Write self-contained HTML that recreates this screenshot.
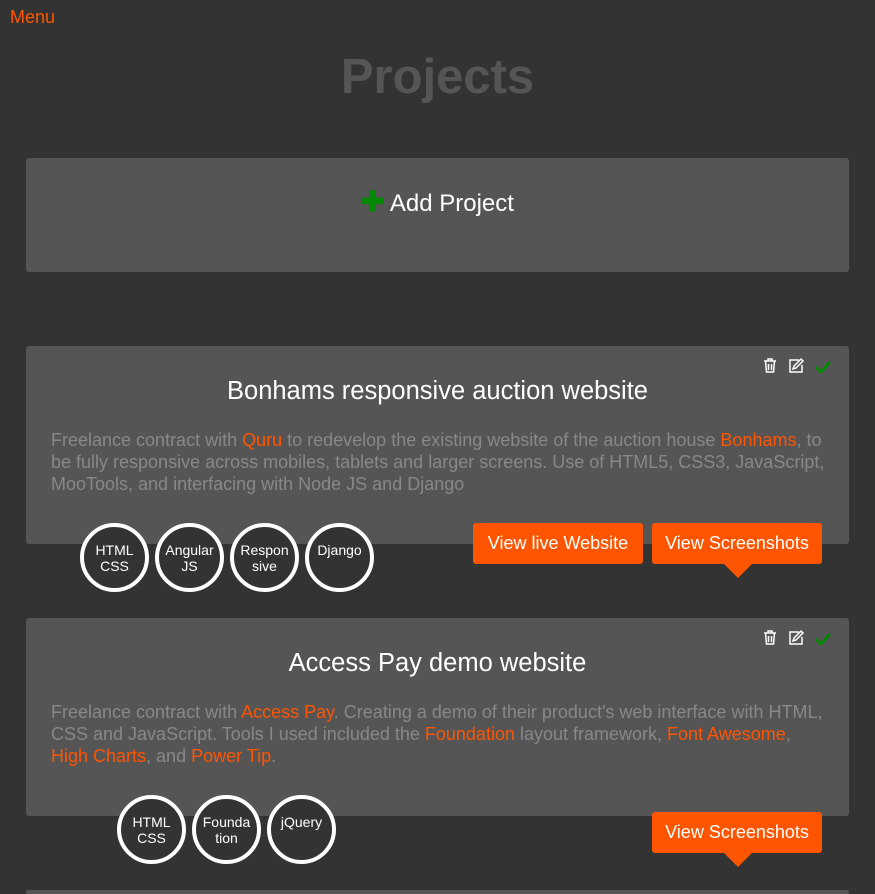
<!DOCTYPE html>
<html style="overflow:hidden;height:894px"><head><style>
body{margin:0;background:#333;font-family:"Liberation Sans",sans-serif;width:875px;height:894px;overflow:hidden;position:relative}
.menu{position:absolute;left:10px;top:7px;color:#f50;font-size:18px}
h1{position:absolute;top:49px;left:0;width:875px;text-align:center;margin:0;color:#555;font-size:49px;font-weight:bold}
.add{position:absolute;left:26px;top:158px;width:823px;height:114px;background:#555;border-radius:3px;color:#fff;font-size:24px;text-align:center;line-height:88px}
.add b{color:#080;font-size:28px}
.card{position:absolute;left:26px;width:823px;height:198px;background:#555;border-radius:3px}
.card h2{margin:0;position:absolute;top:31px;width:100%;text-align:center;color:#fff;font-weight:normal;font-size:25.5px}
.card p{position:absolute;left:25px;top:83px;width:775px;margin:0;color:#888;font-size:18px;line-height:22px}
.card p a{color:#f50}
.icons{position:absolute;right:12px;top:10px}
.circ{position:absolute;width:61px;height:61px;border:4.5px solid #fff;border-radius:50%;background:#333;color:#fff;font-size:14px;text-align:center;box-sizing:content-box}
.circ span{display:block;margin-top:15px;line-height:16px}
.btn{position:absolute;height:41px;background:#f50;color:#fff;font-size:18px;line-height:41px;text-align:center;border-radius:3px}
.btn.arr:after{content:"";position:absolute;left:72px;bottom:-14px;border-left:14px solid transparent;border-right:14px solid transparent;border-top:14px solid #f50}
</style></head><body>
<div class="menu">Menu</div>
<h1>Projects</h1>
<div class="add"><b>✚</b> Add Project</div>

<div class="card" style="top:346px">
<svg class="icons" width="76" height="20" viewBox="0 0 76 20"><g fill="none" stroke="#fff" stroke-width="1.5"><path d="M3 5h12M7 5V3h4v2M4.5 5l1 11h7l1-11M7.5 8v6M10.5 8v6"/><path d="M38 4h-9v12h12v-7M35 12l-3 1 1-3 7-7 2 2z"/></g><path d="M56 10l4 4 8-9 2 2-10 11-6-6z" fill="#080"/></svg>
<h2>Bonhams responsive auction website</h2>
<p>Freelance contract with <a>Quru</a> to redevelop the existing website of the auction house <a>Bonhams</a>, to be fully responsive across mobiles, tablets and larger screens. Use of HTML5, CSS3, JavaScript, MooTools, and interfacing with Node JS and Django</p>
</div>
<div class="circ" style="left:80px;top:523px"><span>HTML<br>CSS</span></div>
<div class="circ" style="left:155px;top:523px"><span>Angular<br>JS</span></div>
<div class="circ" style="left:230px;top:523px"><span>Respon<br>sive</span></div>
<div class="circ" style="left:305px;top:523px"><span>Django</span></div>
<div class="btn" style="left:473px;top:523px;width:170px">View live Website</div>
<div class="btn arr" style="left:652px;top:523px;width:170px">View Screenshots</div>

<div class="card" style="top:618px">
<svg class="icons" width="76" height="20" viewBox="0 0 76 20"><g fill="none" stroke="#fff" stroke-width="1.5"><path d="M3 5h12M7 5V3h4v2M4.5 5l1 11h7l1-11M7.5 8v6M10.5 8v6"/><path d="M38 4h-9v12h12v-7M35 12l-3 1 1-3 7-7 2 2z"/></g><path d="M56 10l4 4 8-9 2 2-10 11-6-6z" fill="#080"/></svg>
<h2>Access Pay demo website</h2>
<p>Freelance contract with <a>Access Pay</a>. Creating a demo of their product's web interface with HTML, CSS and JavaScript. Tools I used included the <a>Foundation</a> layout framework, <a>Font Awesome</a>,<br><a>High Charts</a>, and <a>Power Tip</a>.</p>
</div>
<div class="circ" style="left:117px;top:795px"><span>HTML<br>CSS</span></div>
<div class="circ" style="left:192px;top:795px"><span>Founda<br>tion</span></div>
<div class="circ" style="left:267px;top:795px"><span>jQuery</span></div>
<div class="btn arr" style="left:652px;top:812px;width:170px">View Screenshots</div>
<div class="card" style="top:890px;height:4px"></div>
</body></html>
